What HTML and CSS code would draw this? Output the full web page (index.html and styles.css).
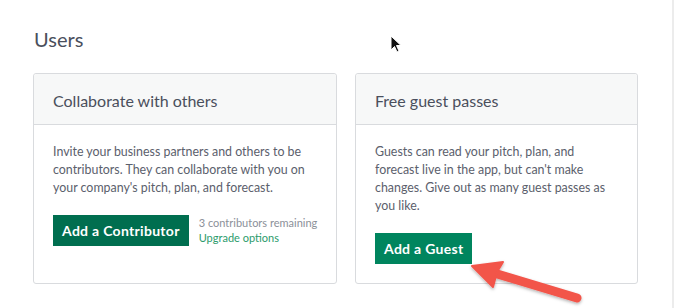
FILE: index.html
```html
<!DOCTYPE html>
<html lang="en">

<head>
    <meta charset="UTF-8">
    <title>Users</title>
    <link rel="stylesheet" href="styles.css">
</head>

<body>
    <div class="page">
        <h2 class="section-title">Users</h2>
        <div class="cards">
            <div class="card">
                <div class="card-header">Collaborate with others</div>
                <div class="card-body">
                    <p>Invite your business partners and others to be contributors. They can collaborate with you on your company's pitch, plan, and forecast.</p>
                    <div class="actions">
                        <button class="btn">Add a Contributor</button>
                        <div class="remaining">
                            <span>3 contributors remaining</span>
                            <a href="#">Upgrade options</a>
                        </div>
                    </div>
                </div>
            </div>
            <div class="card">
                <div class="card-header">Free guest passes</div>
                <div class="card-body">
                    <p>Guests can read your pitch, plan, and forecast live in the app, but can't make changes. Give out as many guest passes as you like.</p>
                    <div class="actions">
                        <button class="btn btn-hover">Add a Guest</button>
                    </div>
                </div>
            </div>
        </div>

        <!-- mouse pointer -->
        <svg class="cursor" width="14" height="20" viewBox="0 0 14 20">
            <path d="M1 1 L1 15 L4.5 11.5 L7 17 L9 16 L6.5 10.5 L11 10.5 Z" fill="#111" stroke="#fff" stroke-width="1"/>
        </svg>

        <!-- annotation arrow -->
        <svg class="arrow" width="130" height="60" viewBox="0 0 130 60">
            <defs>
                <filter id="shadow" x="-20%" y="-20%" width="140%" height="160%">
                    <feDropShadow dx="0" dy="1.5" stdDeviation="1.5" flood-color="#000" flood-opacity="0.3"/>
                </filter>
            </defs>
            <g filter="url(#shadow)">
                <line x1="32" y1="23" x2="115" y2="48" stroke="#f2544a" stroke-width="9" stroke-linecap="round"/>
                <path d="M10 16 L41 12 L35 22 L31 37 Z" fill="#f2544a" stroke="#f2544a" stroke-width="2" stroke-linejoin="round"/>
            </g>
        </svg>
    </div>
</body>

</html>
```

FILE: styles.css
```css
body {
    margin: 0;
    font-family: Lato, "Noto Sans", sans-serif;
    background: #fff;
    color: #5b606c;
}

.page {
    position: relative;
    width: 674px;
    height: 308px;
    border-right: 2px solid #ececec;
    padding: 28px 0 0 33px;
    box-sizing: border-box;
}

.section-title {
    margin: 0 0 22px 1px;
    font-size: 20px;
    font-weight: 400;
    color: #4a4f5c;
    line-height: 23px;
}

.cards {
    display: grid;
    grid-template-columns: 304px 283px;
    gap: 18px;
}

.card {
    border: 1px solid #d9dbde;
    border-radius: 3px;
    height: 211px;
    box-sizing: border-box;
}

.card-header {
    background: #f7f8f8;
    border-bottom: 1px solid #d9dbde;
    border-radius: 3px 3px 0 0;
    padding: 17px 19px 0;
    height: 51px;
    box-sizing: border-box;
    font-size: 16px;
    color: #4a4f5c;
}

.card-body {
    padding: 18px 19px;
}

.card-body p {
    margin: 0 0 18px;
    font-size: 12.4px;
    line-height: 18px;
}

.actions {
    display: flex;
    align-items: flex-start;
    gap: 10px;
}

.btn {
    font-family: inherit;
    font-size: 14px;
    font-weight: 700;
    letter-spacing: 0.3px;
    color: #fff;
    background: #006e4f;
    border: none;
    height: 31px;
    padding: 0 9px;
    white-space: nowrap;
    cursor: pointer;
}

.btn-hover {
    background: #00855e;
}

.remaining {
    display: flex;
    flex-direction: column;
    font-size: 11px;
    line-height: 15px;
    color: #8b9099;
    white-space: nowrap;
}

.remaining a {
    color: #2c9b6c;
    text-decoration: none;
}

.cursor {
    position: absolute;
    left: 390px;
    top: 35px;
}

.arrow {
    position: absolute;
    left: 462px;
    top: 250px;
}
```
